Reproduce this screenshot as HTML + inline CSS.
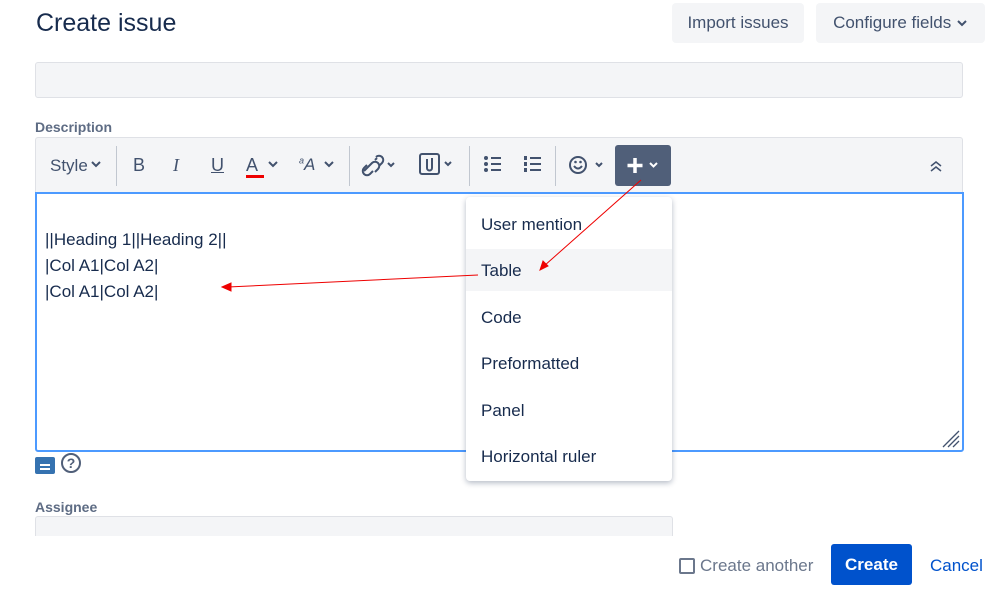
<!DOCTYPE html>
<html><head><meta charset="utf-8"><style>
*{box-sizing:border-box;margin:0;padding:0}
body{width:998px;height:593px;background:#fff;font-family:"Liberation Sans",sans-serif;color:#172b4d;position:relative;overflow:hidden}
.a{position:absolute}
.btn{position:absolute;background:#f4f5f7;border-radius:4px;font-size:17px;color:#42526e;display:flex;align-items:center;justify-content:center}
.tb{position:absolute;font-size:18px;color:#42526e;top:155px}
.sep{position:absolute;top:146px;width:1px;height:40px;background:#c1c7d0}
.item{position:absolute;left:466px;width:206px;height:42px;font-size:17px;padding-left:15px;line-height:42px;color:#172b4d}
.cv{position:absolute;top:158px}
</style></head><body>
<div class="a" style="left:36px;top:9px;font-size:25px;color:#172b4d">Create issue</div>
<div class="btn" style="left:672px;top:3px;width:132px;height:40px">Import issues</div>
<div class="btn" style="left:816px;top:3px;width:169px;height:40px">Configure fields&nbsp;<svg width="12" height="8"><path d="M2 2l4 4 4-4" fill="none" stroke="#42526e" stroke-width="2"/></svg></div>
<div class="a" style="left:35px;top:62px;width:928px;height:36px;background:#f4f5f7;border:1px solid #dfe1e6;border-radius:3px"></div>
<div class="a" style="left:35px;top:119px;font-size:14px;font-weight:bold;color:#5e6c84">Description</div>
<div class="a" style="left:35px;top:137px;width:928px;height:56px;background:#f4f5f7;border:1px solid #dfe1e6;border-bottom:none;border-radius:3px 3px 0 0"></div>
<div class="tb" style="left:50px;font-size:17px;top:156px">Style</div>
<svg class="cv" style="left:91px;top:161px" width="10" height="7"><path d="M1 1l4 4 4-4" fill="none" stroke="#42526e" stroke-width="2"/></svg>
<div class="sep" style="left:116px"></div>
<div class="tb" style="left:133px">B</div>
<div class="tb" style="left:173px;font-style:italic;font-family:'Liberation Serif',serif">I</div>
<div class="tb" style="left:211px;text-decoration:underline">U</div>
<div class="tb" style="left:246px">A</div><div class="a" style="left:246px;top:175px;width:18px;height:3px;background:#e00"></div>
<svg class="cv" style="left:268px;top:161px" width="10" height="7"><path d="M1 1l4 4 4-4" fill="none" stroke="#42526e" stroke-width="2"/></svg>
<div class="tb" style="left:299px;font-style:italic;font-size:17px"><sup style="font-size:9px">a</sup>A</div>
<svg class="cv" style="left:324px;top:161px" width="10" height="7"><path d="M1 1l4 4 4-4" fill="none" stroke="#42526e" stroke-width="2"/></svg>
<div class="sep" style="left:349px"></div>
<svg class="a" style="left:360px;top:153px" width="40" height="24"><g fill="none" stroke="#42526e" stroke-width="2"><path d="M4 18l8-8a4 4 0 016 6l-3 3M17 5l-2 2M12 10l-2 2"/><path d="M7 12l-3 3a4 4 0 006 6l3-3M16 4a4 4 0 016 6l-3 3"/><path d="M28 10l3 3 3-3"/></g></svg>
<svg class="a" style="left:418px;top:152px" width="38" height="26"><g fill="none" stroke="#42526e" stroke-width="2"><rect x="2" y="2" width="19" height="20" rx="2"/><path d="M9 7v9a2.5 2.5 0 005 0V6"/><path d="M27 10l3 3 3-3"/></g></svg>
<div class="sep" style="left:469px"></div>
<svg class="a" style="left:483px;top:155px" width="20" height="20"><g fill="#42526e"><circle cx="3" cy="3" r="2"/><circle cx="3" cy="9" r="2"/><circle cx="3" cy="15" r="2"/><rect x="8" y="2" width="10" height="2"/><rect x="8" y="8" width="10" height="2"/><rect x="8" y="14" width="10" height="2"/></g></svg>
<svg class="a" style="left:523px;top:155px" width="20" height="20"><g fill="#42526e"><rect x="1" y="1" width="3" height="4"/><rect x="1" y="7" width="3" height="4"/><rect x="1" y="13" width="3" height="4"/><rect x="7" y="2" width="11" height="2"/><rect x="7" y="8" width="11" height="2"/><rect x="7" y="14" width="11" height="2"/></g></svg>
<div class="sep" style="left:555px"></div>
<svg class="a" style="left:568px;top:154px" width="38" height="22"><g fill="none" stroke="#42526e" stroke-width="2"><circle cx="10" cy="11" r="8"/><path d="M6 12q4 5 8 0"/><path d="M28 9l3 3 3-3"/></g><circle cx="7.5" cy="8" r="1.3" fill="#42526e"/><circle cx="12.5" cy="8" r="1.3" fill="#42526e"/></svg>
<div class="a" style="left:615px;top:145px;width:56px;height:41px;background:#505f79;border-radius:3px"></div>
<svg class="a" style="left:626px;top:156px" width="36" height="20"><g fill="none" stroke="#fff" stroke-width="3.5"><path d="M9 2v15M1.5 9.5h15"/></g><path d="M24 7l3.5 3.5 3.5-3.5" fill="none" stroke="#fff" stroke-width="2"/></svg>
<svg class="a" style="left:929px;top:160px" width="14" height="12"><g fill="none" stroke="#42526e" stroke-width="1.5"><path d="M2 6l5-4 5 4M2 11l5-4 5 4"/></g></svg>
<div class="a" style="left:35px;top:192px;width:929px;height:260px;border:2px solid #4c9aff;border-radius:0 0 3px 3px;background:#fff"></div>
<div class="a" style="left:45px;top:227px;font-size:17px;line-height:26px;color:#172b4d">||Heading 1||Heading 2||<br>|Col A1|Col A2|<br>|Col A1|Col A2|</div>
<svg class="a" style="left:940px;top:430px" width="20" height="18"><g stroke="#42526e" stroke-width="1.3"><path d="M3 17L19 1M8 17L19 6M13 17L19 11"/></g></svg>
<div class="a" style="left:35px;top:457px;width:20px;height:17px;background:#3572b0;border-radius:2px"></div>
<div class="a" style="left:40px;top:464px;width:10px;height:1.5px;background:#fff"></div><div class="a" style="left:40px;top:468px;width:10px;height:1.5px;background:#fff"></div>
<div class="a" style="left:61px;top:453px;width:20px;height:20px;border:2px solid #505f79;border-radius:50%;font-size:14px;text-align:center;line-height:16px;color:#505f79;font-weight:bold">?</div>
<div class="a" style="left:466px;top:197px;width:206px;height:284px;background:#fff;border-radius:4px;box-shadow:0 2px 6px rgba(9,30,66,.3)"></div>
<div class="item" style="top:204px">User mention</div>
<div class="item" style="top:249px;background:#f4f5f7;line-height:44px">Table</div>
<div class="item" style="top:297px">Code</div>
<div class="item" style="top:343px">Preformatted</div>
<div class="item" style="top:390px">Panel</div>
<div class="item" style="top:436px">Horizontal ruler</div>
<svg class="a" style="left:0;top:0" width="998" height="593"><g stroke="#e00" stroke-width="1" fill="#e00"><line x1="641" y1="180" x2="544" y2="266"/><path d="M540 270l3-9 5 5z"/><line x1="478" y1="275" x2="228" y2="287"/><path d="M222 287l9-4v8z"/></g></svg>
<div class="a" style="left:35px;top:499px;font-size:14px;font-weight:bold;color:#5e6c84">Assignee</div>
<div class="a" style="left:35px;top:516px;width:638px;height:20px;background:#f4f5f7;border:1px solid #dfe1e6;border-bottom:none;border-radius:3px 3px 0 0"></div>
<div class="a" style="left:679px;top:558px;width:16px;height:16px;border:2px solid #6b778c;border-radius:2px"></div>
<div class="a" style="left:700px;top:556px;font-size:17px;color:#6b778c">Create another</div>
<div class="a" style="left:831px;top:544px;width:81px;height:41px;background:#0052cc;border-radius:3px;color:#fff;font-weight:bold;font-size:17px;text-align:center;line-height:41px">Create</div>
<div class="a" style="left:930px;top:556px;font-size:17px;color:#0052cc">Cancel</div>
</body></html>
